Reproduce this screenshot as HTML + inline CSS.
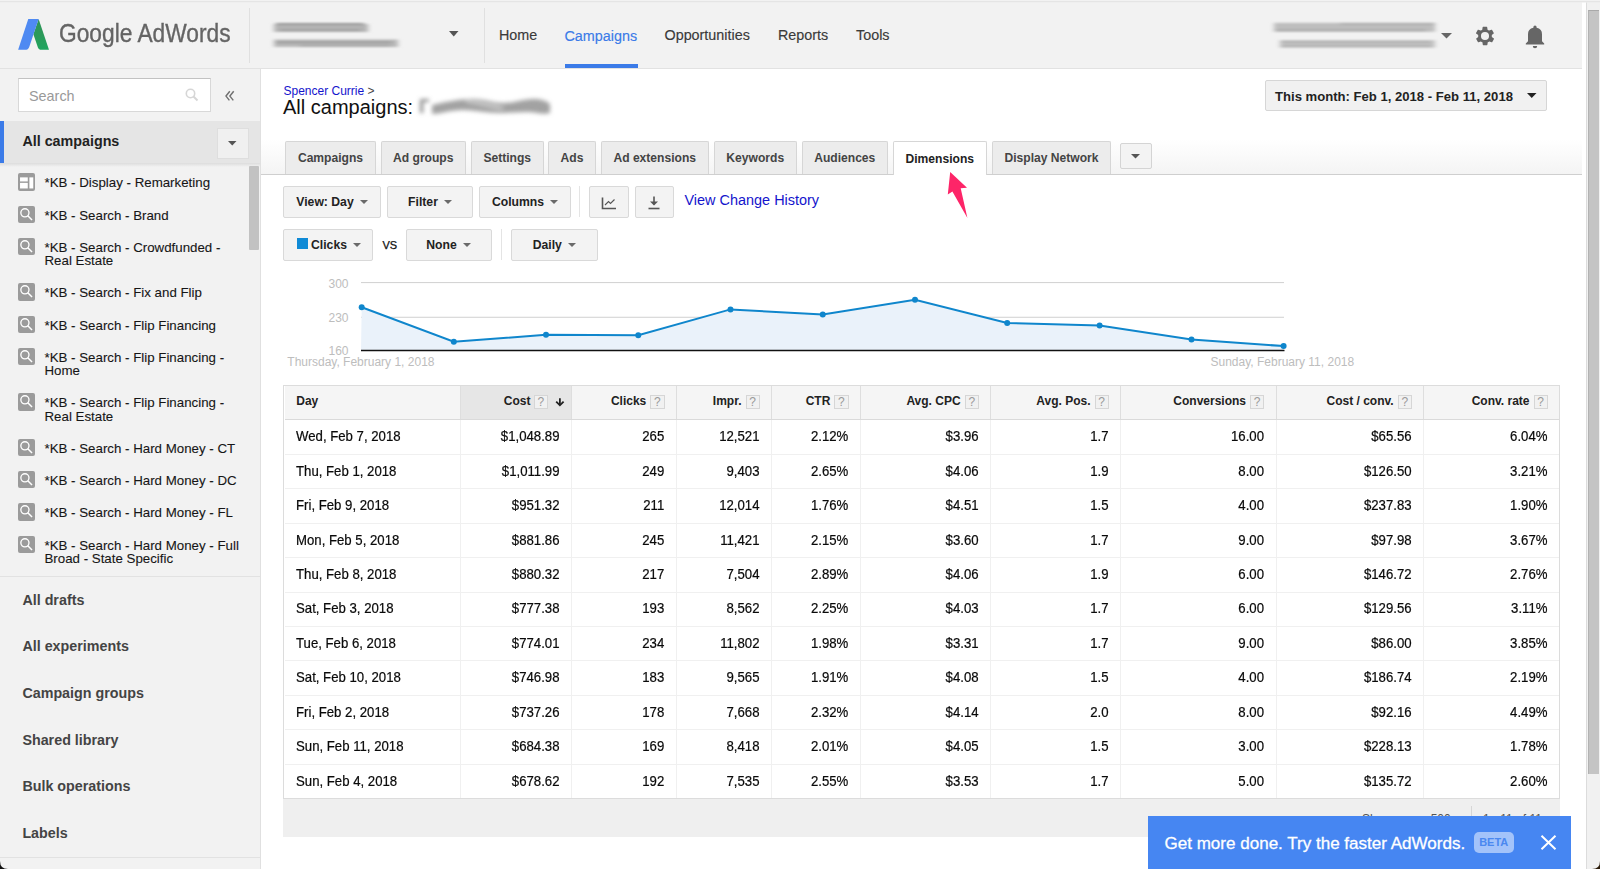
<!DOCTYPE html>
<html><head><meta charset="utf-8">
<style>
*{box-sizing:border-box;margin:0;padding:0}
html,body{width:1600px;height:869px;overflow:hidden;background:#fff;font-family:"Liberation Sans",sans-serif;color:#222}
.a{position:absolute;white-space:nowrap}
#hdr{position:absolute;left:0;top:0;width:1582px;height:69px;background:#f2f2f2;border-top:1px solid #f1f1f1;border-bottom:1px solid #e2e2e2}
.nav{position:absolute;top:0;font-size:14.35px;color:#3a3a3a;-webkit-text-stroke:0.15px currentColor;line-height:1}
.blur{position:absolute;background:#9a9a9a;border-radius:4px;filter:blur(2.2px);opacity:.75}
#side{position:absolute;left:0;top:69px;width:261px;height:800px;background:#f2f2f2;border-right:1px solid #e0e0e0}
.ci{position:absolute;left:44.5px;font-size:13.3px;color:#161616;-webkit-text-stroke:0.1px #161616;line-height:13.6px;white-space:nowrap}
.ico{position:absolute;left:18px;width:17.3px;height:17.3px;background:#9b9b9b;border-radius:2px}
.bi{position:absolute;left:22.4px;font-size:14.3px;font-weight:bold;color:#444;line-height:1;white-space:nowrap}
.tab{position:absolute;top:141px;height:32.5px;background:#ececec;border:1px solid #d6d6d6;border-bottom:none;border-radius:2px 2px 0 0;font-size:12.1px;font-weight:bold;color:#444;text-align:center;line-height:33px;white-space:nowrap}
.tab.act{background:#fff;height:34.5px;top:140.5px;line-height:34px;color:#222}
.btn{position:absolute;height:31.5px;background:#f3f3f3;border:1px solid #d9d9d9;border-radius:2px;font-size:12.2px;font-weight:bold;color:#222;display:flex;align-items:center;justify-content:center;white-space:nowrap}
.btn i{display:inline-block;width:0;height:0;border-left:4.5px solid transparent;border-right:4.5px solid transparent;border-top:4.5px solid #6a6a6a;margin-left:6px;margin-top:1px}
.th{position:absolute;top:395.1px;font-size:12px;font-weight:bold;color:#222;line-height:1;white-space:nowrap}
.q{position:absolute;top:394.75px;width:14.3px;height:13.9px;border:1px solid #d6d6d6;background:#f1f1f1;color:#9a9a9a;font-size:12px;line-height:12.5px;text-align:center}
.td{position:absolute;font-size:13.2px;color:#0a0a0a;-webkit-text-stroke:0.2px #0a0a0a;transform:scaleY(1.1);transform-origin:0 11.2px;line-height:1;white-space:nowrap}
</style></head><body>

<!-- HEADER -->
<div id="hdr">
  <svg class="a" style="left:14px;top:13px" width="40" height="40" viewBox="0 0 40 40">
    <defs><linearGradient id="gg" x1="0" y1="0" x2="0" y2="1"><stop offset="0" stop-color="#2f9457"/><stop offset="0.55" stop-color="#2b9a5a"/><stop offset="1" stop-color="#1fa55f"/></linearGradient></defs>
    <path d="M24.63 5.06L34.98 35.67L26.2 35.67Q24.6 35.67 23.9 33.6L19.4 20.3Z" fill="url(#gg)"/>
    <path d="M14.27 5.06L24.63 5.06L15.4 32.6Q14.5 35.67 12.2 35.67L4.14 35.67Z" fill="#4f8af2"/>
  </svg>
  <div class="a" style="left:58.5px;top:20.3px;font-size:25px;color:#646464;-webkit-text-stroke:0.35px #646464;line-height:1;transform:scaleX(0.91);transform-origin:0 0">Google AdWords</div>
  <div class="a" style="left:249px;top:7px;width:1px;height:55px;background:#e0e0e0"></div>
  <svg class="a" style="left:262px;top:14px" width="160" height="42" viewBox="262 15 160 42"><defs><filter id="mb" x="-10%" y="-60%" width="120%" height="220%"><feGaussianBlur stdDeviation="2.6 0.8"/></filter></defs>
  <g filter="url(#mb)"><rect x="274" y="24" width="94" height="8" fill="#b4b4b4"/><rect x="276" y="23" width="88" height="1.6" fill="#909090"/><rect x="280" y="29.5" width="80" height="1.5" fill="#9a9a9a"/>
  <rect x="274" y="39.5" width="124" height="7.5" fill="#b8b8b8"/><rect x="276" y="41.5" width="116" height="1.6" fill="#959595"/><rect x="300" y="45" width="90" height="1.4" fill="#a0a0a0"/></g></svg>
  <svg class="a" style="left:449px;top:30px" width="10" height="6"><path d="M0 0H9.5L4.75 5.5Z" fill="#555"/></svg>
  <div class="a" style="left:484px;top:7px;width:1px;height:55px;background:#e0e0e0"></div>
  <div class="nav" style="left:499px;top:27px">Home</div>
  <div class="nav" style="left:564.5px;top:28px;color:#3b7be8">Campaigns</div>
  <div class="a" style="left:564.5px;top:63px;width:73px;height:4px;background:#3b7be8"></div>
  <div class="nav" style="left:664.5px;top:27px">Opportunities</div>
  <div class="nav" style="left:778px;top:27px">Reports</div>
  <div class="nav" style="left:856px;top:27px">Tools</div>
  <svg class="a" style="left:1262px;top:14px" width="185" height="42" viewBox="1262 15 185 42">
  <g filter="url(#mb)"><rect x="1274" y="22.8" width="161" height="9" fill="#bebebe"/><rect x="1276" y="29.5" width="150" height="1.6" fill="#a5a5a5"/><rect x="1340" y="23" width="95" height="1.5" fill="#a8a8a8"/>
  <rect x="1280" y="40.2" width="155" height="7.5" fill="#c2c2c2"/><rect x="1281" y="41" width="150" height="1.4" fill="#a8a8a8"/><rect x="1281" y="45.3" width="150" height="1.4" fill="#aaaaaa"/></g></svg>
  <svg class="a" style="left:1441px;top:32px" width="12" height="7"><path d="M0 0H11L5.5 5.5Z" fill="#666"/></svg>
  <!-- gear -->
  <svg class="a" style="left:1474px;top:24px" width="22" height="22" viewBox="0 0 24 24">
    <path fill="#666" d="M19.4 13a7.5 7.5 0 0 0 0-2l2.1-1.6a.5.5 0 0 0 .1-.6l-2-3.5a.5.5 0 0 0-.6-.2l-2.5 1a7.3 7.3 0 0 0-1.7-1l-.4-2.6a.5.5 0 0 0-.5-.5h-4a.5.5 0 0 0-.5.4l-.4 2.7a7.6 7.6 0 0 0-1.7 1l-2.5-1a.5.5 0 0 0-.6.2l-2 3.5a.5.5 0 0 0 .1.6L4.6 11a7.5 7.5 0 0 0 0 2l-2.1 1.6a.5.5 0 0 0-.1.6l2 3.5a.5.5 0 0 0 .6.2l2.5-1a7.3 7.3 0 0 0 1.7 1l.4 2.6a.5.5 0 0 0 .5.5h4a.5.5 0 0 0 .5-.4l.4-2.7a7.6 7.6 0 0 0 1.7-1l2.5 1a.5.5 0 0 0 .6-.2l2-3.5a.5.5 0 0 0-.1-.6zM12 16.4a4.4 4.4 0 1 1 0-8.8 4.4 4.4 0 0 1 0 8.8z"/>
  </svg>
  <!-- bell -->
  <svg class="a" style="left:1524px;top:23px" width="22" height="25" viewBox="0 0 22 25">
    <path fill="#666" d="M11 1.5a1.6 1.6 0 0 1 1.6 1.6v.6A6.6 6.6 0 0 1 18 10.3v6.9l2.2 2.3v1H1.8v-1L4 17.2v-6.9a6.6 6.6 0 0 1 5.4-6.6v-.6A1.6 1.6 0 0 1 11 1.5zM8.8 22h4.4a2.2 2.2 0 0 1-4.4 0z"/>
  </svg>
</div>

<!-- SIDEBAR -->
<div id="side">
  <div class="a" style="left:18px;top:9px;width:193px;height:34px;background:#fff;border:1px solid #d8d8d8;border-top-color:#c2c2c2"></div>
  <div class="a" style="left:29px;top:20px;font-size:14.4px;color:#999;line-height:1">Search</div>
  <svg class="a" style="left:185px;top:19px" width="14" height="14" viewBox="0 0 14 14"><circle cx="5.5" cy="5.5" r="4.2" fill="none" stroke="#d6d6d6" stroke-width="1.6"/><path d="M8.5 8.5L12.5 12.5" stroke="#d6d6d6" stroke-width="2"/></svg>
  <svg class="a" style="left:224px;top:20px" width="12" height="12" viewBox="224 89 12 12"><path d="M229.8 91.2L226 96.1L229.4 100.4M233.7 91.2L229.9 96.1L233.3 100.4" fill="none" stroke="#707070" stroke-width="1.45"/></svg>
  <div class="a" style="left:0;top:52px;width:260px;height:42px;background:#e5e5e5"></div>
  <div class="a" style="left:0;top:52px;width:4px;height:42px;background:#3b7be8"></div>
  <div class="a" style="left:22.4px;top:65px;font-size:14.3px;font-weight:bold;color:#222;line-height:1">All campaigns</div>
  <div class="a" style="left:216.5px;top:58.5px;width:32px;height:31px;background:#f0f0f0;border:1px solid #dedede"></div>
  <svg class="a" style="left:228px;top:72px" width="9" height="5"><path d="M0 0H8.5L4.25 4.5Z" fill="#555"/></svg>
  <div class="a" style="left:0;top:94px;width:260px;height:4px;background:linear-gradient(#dcdcdc,#f2f2f2)"></div>
  <div class="a" style="left:249px;top:97px;width:10px;height:84px;background:#c2c2c2;border-radius:1px"></div>

  <div class="ico" style="top:104.30px;background:#9b9b9b"><svg width="17.3" height="17.3" viewBox="0 0 17 17" style="display:block"><rect x="2" y="4.3" width="7.6" height="4" fill="#fff"/><rect x="2" y="9.7" width="7.6" height="5.5" fill="#fff"/><rect x="11.2" y="4.3" width="3.8" height="10.9" fill="#fff"/></svg></div>
  <div class="ci" style="top:107.20px">*KB - Display - Remarketing</div>
  <div class="ico" style="top:136.60px"><svg width="17.3" height="17.3" viewBox="0 0 17 17" style="display:block"><circle cx="6.8" cy="6.7" r="4" fill="none" stroke="#fff" stroke-width="1.3"/><path d="M9.6 9.6L13.8 13.8" stroke="#fff" stroke-width="1.5"/></svg></div>
  <div class="ci" style="top:139.50px">*KB - Search - Brand</div>
  <div class="ico" style="top:168.90px"><svg width="17.3" height="17.3" viewBox="0 0 17 17" style="display:block"><circle cx="6.8" cy="6.7" r="4" fill="none" stroke="#fff" stroke-width="1.3"/><path d="M9.6 9.6L13.8 13.8" stroke="#fff" stroke-width="1.5"/></svg></div>
  <div class="ci" style="top:171.80px">*KB - Search - Crowdfunded -<br>Real Estate</div>
  <div class="ico" style="top:214.35px"><svg width="17.3" height="17.3" viewBox="0 0 17 17" style="display:block"><circle cx="6.8" cy="6.7" r="4" fill="none" stroke="#fff" stroke-width="1.3"/><path d="M9.6 9.6L13.8 13.8" stroke="#fff" stroke-width="1.5"/></svg></div>
  <div class="ci" style="top:217.25px">*KB - Search - Fix and Flip</div>
  <div class="ico" style="top:246.65px"><svg width="17.3" height="17.3" viewBox="0 0 17 17" style="display:block"><circle cx="6.8" cy="6.7" r="4" fill="none" stroke="#fff" stroke-width="1.3"/><path d="M9.6 9.6L13.8 13.8" stroke="#fff" stroke-width="1.5"/></svg></div>
  <div class="ci" style="top:249.55px">*KB - Search - Flip Financing</div>
  <div class="ico" style="top:278.95px"><svg width="17.3" height="17.3" viewBox="0 0 17 17" style="display:block"><circle cx="6.8" cy="6.7" r="4" fill="none" stroke="#fff" stroke-width="1.3"/><path d="M9.6 9.6L13.8 13.8" stroke="#fff" stroke-width="1.5"/></svg></div>
  <div class="ci" style="top:281.85px">*KB - Search - Flip Financing -<br>Home</div>
  <div class="ico" style="top:324.40px"><svg width="17.3" height="17.3" viewBox="0 0 17 17" style="display:block"><circle cx="6.8" cy="6.7" r="4" fill="none" stroke="#fff" stroke-width="1.3"/><path d="M9.6 9.6L13.8 13.8" stroke="#fff" stroke-width="1.5"/></svg></div>
  <div class="ci" style="top:327.30px">*KB - Search - Flip Financing -<br>Real Estate</div>
  <div class="ico" style="top:369.85px"><svg width="17.3" height="17.3" viewBox="0 0 17 17" style="display:block"><circle cx="6.8" cy="6.7" r="4" fill="none" stroke="#fff" stroke-width="1.3"/><path d="M9.6 9.6L13.8 13.8" stroke="#fff" stroke-width="1.5"/></svg></div>
  <div class="ci" style="top:372.75px">*KB - Search - Hard Money - CT</div>
  <div class="ico" style="top:402.15px"><svg width="17.3" height="17.3" viewBox="0 0 17 17" style="display:block"><circle cx="6.8" cy="6.7" r="4" fill="none" stroke="#fff" stroke-width="1.3"/><path d="M9.6 9.6L13.8 13.8" stroke="#fff" stroke-width="1.5"/></svg></div>
  <div class="ci" style="top:405.05px">*KB - Search - Hard Money - DC</div>
  <div class="ico" style="top:434.45px"><svg width="17.3" height="17.3" viewBox="0 0 17 17" style="display:block"><circle cx="6.8" cy="6.7" r="4" fill="none" stroke="#fff" stroke-width="1.3"/><path d="M9.6 9.6L13.8 13.8" stroke="#fff" stroke-width="1.5"/></svg></div>
  <div class="ci" style="top:437.35px">*KB - Search - Hard Money - FL</div>
  <div class="ico" style="top:466.75px"><svg width="17.3" height="17.3" viewBox="0 0 17 17" style="display:block"><circle cx="6.8" cy="6.7" r="4" fill="none" stroke="#fff" stroke-width="1.3"/><path d="M9.6 9.6L13.8 13.8" stroke="#fff" stroke-width="1.5"/></svg></div>
  <div class="ci" style="top:469.65px">*KB - Search - Hard Money - Full<br>Broad - State Specific</div>

  <div class="a" style="left:0;top:507px;width:260px;height:1px;background:#e2e2e2"></div>
  <div class="bi" style="top:524px">All drafts</div>
  <div class="bi" style="top:570.4px">All experiments</div>
  <div class="bi" style="top:616.8px">Campaign groups</div>
  <div class="bi" style="top:663.6px">Shared library</div>
  <div class="bi" style="top:710.1px">Bulk operations</div>
  <div class="bi" style="top:757.2px">Labels</div>
  <div class="a" style="left:0;top:788px;width:260px;height:1px;background:#e2e2e2"></div>
</div>

<!-- MAIN -->
<div id="main">
  <div class="a" style="left:283.5px;top:84.5px;font-size:12px;color:#1414cc;line-height:1">Spencer Currie <span style="color:#444">&gt;</span></div>
  <div class="a" style="left:283px;top:97.2px;font-size:20px;color:#111;line-height:1">All campaigns:</div>
  <svg class="a" style="left:405px;top:88px" width="160" height="36" viewBox="0 0 160 36"><defs><filter id="bl1" x="-20%" y="-50%" width="140%" height="200%"><feGaussianBlur stdDeviation="2.2"/></filter></defs>
  <g filter="url(#bl1)"><rect x="15" y="11" width="3.2" height="14" fill="#8e8e8e"/><rect x="15" y="11" width="9" height="3" fill="#959595"/>
  <path d="M27 17C40 14 55 11 68 11C80 11 88 15 98 15C110 15 118 11 128 11C136 11 142 13 145 16L145 25C138 27 130 24 122 24C112 24 104 25 94 25C80 25 70 22 58 22C45 22 35 26 27 26Z" fill="#a2a2a2"/>
  <path d="M60 12C75 12 90 17 100 19L96 22C86 20 72 16 62 15Z" fill="#c8c8c8"/></g></svg>

  <div class="a" style="left:1264.5px;top:80px;width:282px;height:31px;background:#f1f1f1;border:1px solid #d6d6d6;border-radius:2px"></div>
  <div class="a" style="left:1275px;top:90px;font-size:13.1px;font-weight:bold;color:#222;line-height:1">This month: Feb 1, 2018 - Feb 11, 2018</div>
  <svg class="a" style="left:1527px;top:92.5px" width="10" height="6"><path d="M0 0H9.5L4.75 5Z" fill="#222"/></svg>

  <!-- tab bar -->
  <div class="a" style="left:261px;top:128px;width:1321px;height:46.5px;background:linear-gradient(#fff 0%,#fff 25%,#f4f4f4 100%);border-bottom:1px solid #cfcfcf"></div>
  <div class="tab" style="left:285.25px;width:90.5px">Campaigns</div>
  <div class="tab" style="left:380.75px;width:85px">Ad groups</div>
  <div class="tab" style="left:470.75px;width:73px">Settings</div>
  <div class="tab" style="left:548.25px;width:47.5px">Ads</div>
  <div class="tab" style="left:600.75px;width:108px">Ad extensions</div>
  <div class="tab" style="left:713.75px;width:83px">Keywords</div>
  <div class="tab" style="left:801.75px;width:86px">Audiences</div>
  <div class="tab act" style="left:892.75px;width:94px">Dimensions</div>
  <div class="tab" style="left:991.75px;width:119.5px">Display Network</div>
  <div class="a" style="left:1119.5px;top:142.5px;width:32.5px;height:26px;background:#f3f3f3;border:1px solid #d4d4d4;border-radius:2px"></div>
  <svg class="a" style="left:1131px;top:154px" width="10" height="6"><path d="M0 0H9L4.5 4.5Z" fill="#555"/></svg>

  <!-- toolbar -->
  <div class="btn" style="left:283px;top:186px;width:98px">View: Day <i></i></div>
  <div class="btn" style="left:387px;top:186px;width:86px">Filter <i></i></div>
  <div class="btn" style="left:479px;top:186px;width:92px">Columns <i></i></div>
  <div class="a" style="left:579px;top:186px;width:1px;height:31px;background:#e4e4e4"></div>
  <div class="btn" style="left:589px;top:186px;width:39.5px;height:32px"></div>
  <svg class="a" style="left:600px;top:195px" width="18" height="16" viewBox="0 0 18 16"><path d="M2.5 2.5V13.5H16" fill="none" stroke="#555" stroke-width="1.6"/><path d="M5 10L8.5 6.5L10.5 8.5L14.5 4.5" fill="none" stroke="#555" stroke-width="1.1"/></svg>
  <div class="btn" style="left:634.5px;top:186px;width:39.5px;height:32px"></div>
  <svg class="a" style="left:647px;top:195px" width="14" height="15" viewBox="0 0 14 15"><path d="M7 1.5V9.5" stroke="#555" stroke-width="1.6"/><path d="M3 6.5L7 10.5L11 6.5Z" fill="#555"/><path d="M1.5 13.5H12.5" stroke="#555" stroke-width="1.6"/></svg>
  <div class="a" style="left:684.5px;top:193px;font-size:14.45px;color:#1414cc;line-height:1">View Change History</div>

  <div class="btn" style="left:283px;top:229px;width:90px"><span style="display:inline-block;width:16px"></span>Clicks <i></i></div>
  <div class="a" style="left:296.5px;top:238px;width:11px;height:11px;background:#0f8ad6"></div>
  <div class="a" style="left:382.5px;top:240px;font-size:11px;color:#111;line-height:1;-webkit-text-stroke:0.25px #111">VS</div>
  <div class="btn" style="left:405.5px;top:229px;width:86px">None <i></i></div>
  <div class="a" style="left:501px;top:229px;width:1px;height:31px;background:#e4e4e4"></div>
  <div class="btn" style="left:511px;top:229px;width:86.5px">Daily <i></i></div>
</div>
<!-- CHART -->
<svg class="a" style="left:0;top:0" width="1600" height="869" viewBox="0 0 1600 869">
  <path d="M361 282.6H1284M361 317.25H1284" stroke="#d0d0d0" stroke-width="1"/>
  <path d="M361.7 307.3L453.8 341.75L546 334.75L638.25 335.25L730.5 309.4L822.75 314.55L915 299.7L1007.2 323L1099.6 325.6L1191.5 339.5L1283.6 346.1L1284 350.5L361 350.5Z" fill="#eaf2fa"/>
  <path d="M361 350.5H1284.5" stroke="#111" stroke-width="1.3"/>
  <path d="M361.7 307.3L453.8 341.75L546 334.75L638.25 335.25L730.5 309.4L822.75 314.55L915 299.7L1007.2 323L1099.6 325.6L1191.5 339.5L1283.6 346.1" fill="none" stroke="#0f86cc" stroke-width="2"/>
  <g fill="#0f86cc"><circle cx="361.7" cy="307.3" r="3"/><circle cx="453.8" cy="341.75" r="3"/><circle cx="546" cy="334.75" r="3"/><circle cx="638.25" cy="335.25" r="3"/><circle cx="730.5" cy="309.4" r="3"/><circle cx="822.75" cy="314.55" r="3"/><circle cx="915" cy="299.7" r="3"/><circle cx="1007.2" cy="323" r="3"/><circle cx="1099.6" cy="325.6" r="3"/><circle cx="1191.5" cy="339.5" r="3"/><circle cx="1283.6" cy="346.1" r="3"/></g>
  <g font-family="Liberation Sans" font-size="12" fill="#bdbdbd" text-anchor="end"><text x="348.5" y="287.5">300</text><text x="348.5" y="321.5">230</text><text x="348.5" y="355">160</text></g>
  <g font-family="Liberation Sans" font-size="12" fill="#bdbdbd"><text x="287.3" y="366">Thursday, February 1, 2018</text><text x="1210.5" y="366">Sunday, February 11, 2018</text></g>
</svg>
<!-- TABLE -->
<div class="a" style="left:283.2px;top:384.7px;width:1276.8px;height:414.40000000000003px;border:1px solid #dcdcdc;background:#fff"></div>
<div class="a" style="left:284.5px;top:386px;width:1274.5px;height:34.25px;background:#f5f5f5;border-bottom:1px solid #dadada"></div>
<div class="a" style="left:460.75px;top:386px;width:110.75px;height:34.25px;background:#e6e6e6;border-bottom:1px solid #dadada"></div>
<div class="a" style="left:284.5px;top:453.71px;width:1274.5px;height:1px;background:#f0f0f0"></div>
<div class="a" style="left:284.5px;top:488.17px;width:1274.5px;height:1px;background:#f0f0f0"></div>
<div class="a" style="left:284.5px;top:522.63px;width:1274.5px;height:1px;background:#f0f0f0"></div>
<div class="a" style="left:284.5px;top:557.09px;width:1274.5px;height:1px;background:#f0f0f0"></div>
<div class="a" style="left:284.5px;top:591.55px;width:1274.5px;height:1px;background:#f0f0f0"></div>
<div class="a" style="left:284.5px;top:626.01px;width:1274.5px;height:1px;background:#f0f0f0"></div>
<div class="a" style="left:284.5px;top:660.47px;width:1274.5px;height:1px;background:#f0f0f0"></div>
<div class="a" style="left:284.5px;top:694.93px;width:1274.5px;height:1px;background:#f0f0f0"></div>
<div class="a" style="left:284.5px;top:729.39px;width:1274.5px;height:1px;background:#f0f0f0"></div>
<div class="a" style="left:284.5px;top:763.85px;width:1274.5px;height:1px;background:#f0f0f0"></div>
<div class="a" style="left:459.75px;top:386px;width:1px;height:33.25px;background:#dedede"></div>
<div class="a" style="left:459.75px;top:420.25px;width:1px;height:377.85px;background:#f0f0f0"></div>
<div class="a" style="left:571.0px;top:386px;width:1px;height:33.25px;background:#dedede"></div>
<div class="a" style="left:571.0px;top:420.25px;width:1px;height:377.85px;background:#f0f0f0"></div>
<div class="a" style="left:675.75px;top:386px;width:1px;height:33.25px;background:#dedede"></div>
<div class="a" style="left:675.75px;top:420.25px;width:1px;height:377.85px;background:#f0f0f0"></div>
<div class="a" style="left:771.0px;top:386px;width:1px;height:33.25px;background:#dedede"></div>
<div class="a" style="left:771.0px;top:420.25px;width:1px;height:377.85px;background:#f0f0f0"></div>
<div class="a" style="left:859.8px;top:386px;width:1px;height:33.25px;background:#dedede"></div>
<div class="a" style="left:859.8px;top:420.25px;width:1px;height:377.85px;background:#f0f0f0"></div>
<div class="a" style="left:990.1px;top:386px;width:1px;height:33.25px;background:#dedede"></div>
<div class="a" style="left:990.1px;top:420.25px;width:1px;height:377.85px;background:#f0f0f0"></div>
<div class="a" style="left:1120.0px;top:386px;width:1px;height:33.25px;background:#dedede"></div>
<div class="a" style="left:1120.0px;top:420.25px;width:1px;height:377.85px;background:#f0f0f0"></div>
<div class="a" style="left:1275.5px;top:386px;width:1px;height:33.25px;background:#dedede"></div>
<div class="a" style="left:1275.5px;top:420.25px;width:1px;height:377.85px;background:#f0f0f0"></div>
<div class="a" style="left:1423.1px;top:386px;width:1px;height:33.25px;background:#dedede"></div>
<div class="a" style="left:1423.1px;top:420.25px;width:1px;height:377.85px;background:#f0f0f0"></div>
<div class="th" style="left:296.25px">Day</div>
<div class="th" style="right:1069.5px">Cost</div><div class="q" style="left:533.75px">?</div>
<svg class="a" style="left:555px;top:397.5px" width="10" height="9" viewBox="0 0 10 9"><path d="M4.9 0.3V7" stroke="#222" stroke-width="1.8"/><path d="M1.2 3.6L4.9 7.3L8.6 3.6" fill="none" stroke="#222" stroke-width="1.8"/></svg>
<div class="th" style="right:953.75px">Clicks</div><div class="q" style="left:650.25px">?</div>
<div class="th" style="right:858.5px">Impr.</div><div class="q" style="left:745.5px">?</div>
<div class="th" style="right:769.7px">CTR</div><div class="q" style="left:834.3px">?</div>
<div class="th" style="right:639.4px">Avg. CPC</div><div class="q" style="left:964.6px">?</div>
<div class="th" style="right:509.5px">Avg. Pos.</div><div class="q" style="left:1094.5px">?</div>
<div class="th" style="right:354px">Conversions</div><div class="q" style="left:1250px">?</div>
<div class="th" style="right:206.4000000000001px">Cost / conv.</div><div class="q" style="left:1397.6px">?</div>
<div class="th" style="right:70.5px">Conv. rate</div><div class="q" style="left:1533.5px">?</div>
<div class="td" style="left:296px;top:430.15px">Wed, Feb 7, 2018</div>
<div class="td" style="right:1040.5px;top:430.15px">$1,048.89</div>
<div class="td" style="right:935.75px;top:430.15px">265</div>
<div class="td" style="right:840.5px;top:430.15px">12,521</div>
<div class="td" style="right:751.7px;top:430.15px">2.12%</div>
<div class="td" style="right:621.4px;top:430.15px">$3.96</div>
<div class="td" style="right:491.5px;top:430.15px">1.7</div>
<div class="td" style="right:336px;top:430.15px">16.00</div>
<div class="td" style="right:188.4000000000001px;top:430.15px">$65.56</div>
<div class="td" style="right:52.5px;top:430.15px">6.04%</div>
<div class="td" style="left:296px;top:464.61px">Thu, Feb 1, 2018</div>
<div class="td" style="right:1040.5px;top:464.61px">$1,011.99</div>
<div class="td" style="right:935.75px;top:464.61px">249</div>
<div class="td" style="right:840.5px;top:464.61px">9,403</div>
<div class="td" style="right:751.7px;top:464.61px">2.65%</div>
<div class="td" style="right:621.4px;top:464.61px">$4.06</div>
<div class="td" style="right:491.5px;top:464.61px">1.9</div>
<div class="td" style="right:336px;top:464.61px">8.00</div>
<div class="td" style="right:188.4000000000001px;top:464.61px">$126.50</div>
<div class="td" style="right:52.5px;top:464.61px">3.21%</div>
<div class="td" style="left:296px;top:499.07px">Fri, Feb 9, 2018</div>
<div class="td" style="right:1040.5px;top:499.07px">$951.32</div>
<div class="td" style="right:935.75px;top:499.07px">211</div>
<div class="td" style="right:840.5px;top:499.07px">12,014</div>
<div class="td" style="right:751.7px;top:499.07px">1.76%</div>
<div class="td" style="right:621.4px;top:499.07px">$4.51</div>
<div class="td" style="right:491.5px;top:499.07px">1.5</div>
<div class="td" style="right:336px;top:499.07px">4.00</div>
<div class="td" style="right:188.4000000000001px;top:499.07px">$237.83</div>
<div class="td" style="right:52.5px;top:499.07px">1.90%</div>
<div class="td" style="left:296px;top:533.53px">Mon, Feb 5, 2018</div>
<div class="td" style="right:1040.5px;top:533.53px">$881.86</div>
<div class="td" style="right:935.75px;top:533.53px">245</div>
<div class="td" style="right:840.5px;top:533.53px">11,421</div>
<div class="td" style="right:751.7px;top:533.53px">2.15%</div>
<div class="td" style="right:621.4px;top:533.53px">$3.60</div>
<div class="td" style="right:491.5px;top:533.53px">1.7</div>
<div class="td" style="right:336px;top:533.53px">9.00</div>
<div class="td" style="right:188.4000000000001px;top:533.53px">$97.98</div>
<div class="td" style="right:52.5px;top:533.53px">3.67%</div>
<div class="td" style="left:296px;top:567.99px">Thu, Feb 8, 2018</div>
<div class="td" style="right:1040.5px;top:567.99px">$880.32</div>
<div class="td" style="right:935.75px;top:567.99px">217</div>
<div class="td" style="right:840.5px;top:567.99px">7,504</div>
<div class="td" style="right:751.7px;top:567.99px">2.89%</div>
<div class="td" style="right:621.4px;top:567.99px">$4.06</div>
<div class="td" style="right:491.5px;top:567.99px">1.9</div>
<div class="td" style="right:336px;top:567.99px">6.00</div>
<div class="td" style="right:188.4000000000001px;top:567.99px">$146.72</div>
<div class="td" style="right:52.5px;top:567.99px">2.76%</div>
<div class="td" style="left:296px;top:602.45px">Sat, Feb 3, 2018</div>
<div class="td" style="right:1040.5px;top:602.45px">$777.38</div>
<div class="td" style="right:935.75px;top:602.45px">193</div>
<div class="td" style="right:840.5px;top:602.45px">8,562</div>
<div class="td" style="right:751.7px;top:602.45px">2.25%</div>
<div class="td" style="right:621.4px;top:602.45px">$4.03</div>
<div class="td" style="right:491.5px;top:602.45px">1.7</div>
<div class="td" style="right:336px;top:602.45px">6.00</div>
<div class="td" style="right:188.4000000000001px;top:602.45px">$129.56</div>
<div class="td" style="right:52.5px;top:602.45px">3.11%</div>
<div class="td" style="left:296px;top:636.91px">Tue, Feb 6, 2018</div>
<div class="td" style="right:1040.5px;top:636.91px">$774.01</div>
<div class="td" style="right:935.75px;top:636.91px">234</div>
<div class="td" style="right:840.5px;top:636.91px">11,802</div>
<div class="td" style="right:751.7px;top:636.91px">1.98%</div>
<div class="td" style="right:621.4px;top:636.91px">$3.31</div>
<div class="td" style="right:491.5px;top:636.91px">1.7</div>
<div class="td" style="right:336px;top:636.91px">9.00</div>
<div class="td" style="right:188.4000000000001px;top:636.91px">$86.00</div>
<div class="td" style="right:52.5px;top:636.91px">3.85%</div>
<div class="td" style="left:296px;top:671.37px">Sat, Feb 10, 2018</div>
<div class="td" style="right:1040.5px;top:671.37px">$746.98</div>
<div class="td" style="right:935.75px;top:671.37px">183</div>
<div class="td" style="right:840.5px;top:671.37px">9,565</div>
<div class="td" style="right:751.7px;top:671.37px">1.91%</div>
<div class="td" style="right:621.4px;top:671.37px">$4.08</div>
<div class="td" style="right:491.5px;top:671.37px">1.5</div>
<div class="td" style="right:336px;top:671.37px">4.00</div>
<div class="td" style="right:188.4000000000001px;top:671.37px">$186.74</div>
<div class="td" style="right:52.5px;top:671.37px">2.19%</div>
<div class="td" style="left:296px;top:705.83px">Fri, Feb 2, 2018</div>
<div class="td" style="right:1040.5px;top:705.83px">$737.26</div>
<div class="td" style="right:935.75px;top:705.83px">178</div>
<div class="td" style="right:840.5px;top:705.83px">7,668</div>
<div class="td" style="right:751.7px;top:705.83px">2.32%</div>
<div class="td" style="right:621.4px;top:705.83px">$4.14</div>
<div class="td" style="right:491.5px;top:705.83px">2.0</div>
<div class="td" style="right:336px;top:705.83px">8.00</div>
<div class="td" style="right:188.4000000000001px;top:705.83px">$92.16</div>
<div class="td" style="right:52.5px;top:705.83px">4.49%</div>
<div class="td" style="left:296px;top:740.29px">Sun, Feb 11, 2018</div>
<div class="td" style="right:1040.5px;top:740.29px">$684.38</div>
<div class="td" style="right:935.75px;top:740.29px">169</div>
<div class="td" style="right:840.5px;top:740.29px">8,418</div>
<div class="td" style="right:751.7px;top:740.29px">2.01%</div>
<div class="td" style="right:621.4px;top:740.29px">$4.05</div>
<div class="td" style="right:491.5px;top:740.29px">1.5</div>
<div class="td" style="right:336px;top:740.29px">3.00</div>
<div class="td" style="right:188.4000000000001px;top:740.29px">$228.13</div>
<div class="td" style="right:52.5px;top:740.29px">1.78%</div>
<div class="td" style="left:296px;top:774.75px">Sun, Feb 4, 2018</div>
<div class="td" style="right:1040.5px;top:774.75px">$678.62</div>
<div class="td" style="right:935.75px;top:774.75px">192</div>
<div class="td" style="right:840.5px;top:774.75px">7,535</div>
<div class="td" style="right:751.7px;top:774.75px">2.55%</div>
<div class="td" style="right:621.4px;top:774.75px">$3.53</div>
<div class="td" style="right:491.5px;top:774.75px">1.7</div>
<div class="td" style="right:336px;top:774.75px">5.00</div>
<div class="td" style="right:188.4000000000001px;top:774.75px">$135.72</div>
<div class="td" style="right:52.5px;top:774.75px">2.60%</div>
<div class="a" style="left:283px;top:799px;width:1276.5px;height:37.5px;background:#efefef"></div>

<!-- footer text peeking -->
<div class="a" style="left:1362px;top:813px;font-size:12px;color:#555;line-height:1">Show rows:&nbsp; 500</div>
<div class="a" style="left:1471px;top:805.5px;width:1px;height:12px;background:#d6d6d6"></div>
<div class="a" style="left:1483px;top:813px;font-size:12px;color:#555;line-height:1">1 - 11 of 11</div>

<!-- banner -->
<div class="a" style="left:1148px;top:816px;width:423px;height:53px;background:#4686f2"></div>
<div class="a" style="left:1164.5px;top:834.5px;font-size:17.05px;color:#fff;-webkit-text-stroke:0.3px #fff;line-height:1">Get more done. Try the faster AdWords.</div>
<div class="a" style="left:1474px;top:832.2px;width:39.5px;height:21px;background:#a3c3fa;border-radius:5px;color:#4a88f0;font-size:11px;font-weight:bold;text-align:center;line-height:21px">BETA</div>
<svg class="a" style="left:1540px;top:835px" width="17" height="15" viewBox="0 0 17 15"><path d="M1.5 0.8L15.5 14.2M15.5 0.8L1.5 14.2" stroke="#fff" stroke-width="2"/></svg>

<!-- arrow annotation -->
<svg class="a" style="left:0;top:0" width="1600" height="869"><path d="M950.2 172L967 187.7L960.7 188.3L967.4 218L952.4 191.4L947.8 194.6Z" fill="#fd2568"/></svg>

<!-- scrollbar -->
<div class="a" style="left:1582px;top:0;width:4px;height:869px;background:#fff"></div>
<div class="a" style="left:1586px;top:0;width:14px;height:869px;background:#f1f1f1;border-left:1px solid #dcdcdc"></div>
<div class="a" style="left:1588px;top:10px;width:11px;height:764px;background:#c4c4c4;border-top:1px solid #a9a9a9;border-left:1px solid #b2b2b2"></div>
<div class="a" style="left:0;top:0;width:1600px;height:1px;background:#f2f2f2"></div><div class="a" style="left:0;top:1px;width:1600px;height:1px;background:#e5e5e5"></div><div class="a" style="left:0;top:2px;width:1600px;height:1px;background:#ececec;opacity:.6"></div>

<!-- corners -->
<svg class="a" style="left:0;top:861px" width="8" height="8"><path d="M0 0Q0 8 8 8H0Z" fill="#111"/></svg>
<svg class="a" style="left:1592px;top:861px" width="8" height="8"><path d="M8 0Q8 8 0 8H8Z" fill="#2a1a08"/></svg>
</body></html>
